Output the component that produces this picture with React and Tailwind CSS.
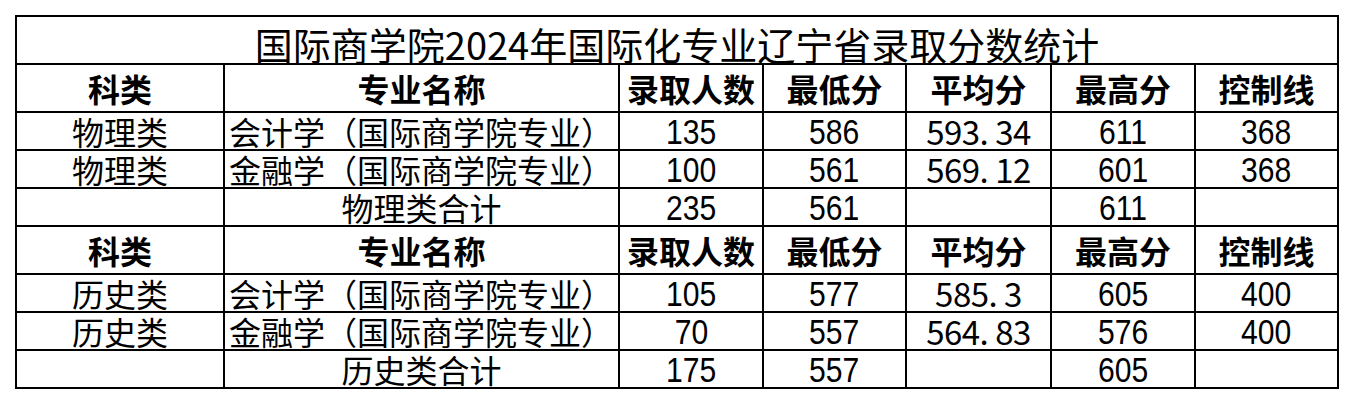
import React from "react";

const cjk = { fontFamily: '"Noto Sans CJK SC", "Noto Sans", sans-serif' };

const HeaderRow = () => (
  <tr className="h-[48px] font-bold text-[32px]">
    {["科类", "专业名称", "录取人数", "最低分", "平均分", "最高分", "控制线"].map((t) => (
      <td key={t} className="border-2 border-black text-center leading-none p-0">
        {t}
      </td>
    ))}
  </tr>
);

const Num = ({ children }) => (
  <span className="inline-block scale-x-[0.86] font-['Liberation_Sans',sans-serif] text-[35px] leading-none">{children}</span>
);

const DataRow = ({ kind, major, n, min, avg, max, ctl }) => (
  <tr className="h-[38px] text-[32px]">
    <td className="border-2 border-black text-center leading-none p-0">{kind}</td>
    <td className={`border-2 border-black leading-none p-0 ${kind ? "text-left pl-[4px]" : "text-center"}`}>{major}</td>
    <td className="border-2 border-black text-center leading-none p-0"><Num>{n}</Num></td>
    <td className="border-2 border-black text-center leading-none p-0"><Num>{min}</Num></td>
    <td className="border-2 border-black text-center leading-none p-0 text-[33px] tracking-[-0.5px]">{avg}</td>
    <td className="border-2 border-black text-center leading-none p-0"><Num>{max}</Num></td>
    <td className="border-2 border-black text-center leading-none p-0"><Num>{ctl}</Num></td>
  </tr>
);

export default function App() {
  return (
    <div className="w-[1354px] h-[404px] bg-white text-black overflow-hidden" style={cjk}>
      <table className="ml-[15px] mt-[15px] border-collapse table-fixed w-[1322px]">
        <colgroup>
          <col className="w-[208px]" />
          <col className="w-[395px]" />
          <col className="w-[144px]" />
          <col className="w-[143px]" />
          <col className="w-[145px]" />
          <col className="w-[144px]" />
          <col className="w-[143px]" />
        </colgroup>
        <tbody>
          <tr className="h-[48px]">
            <td colSpan={7} className="border-2 border-black text-center text-[38px] leading-none p-0 align-bottom">
              国际商学院2024年国际化专业辽宁省录取分数统计
            </td>
          </tr>
          <HeaderRow />
          <DataRow kind="物理类" major="会计学（国际商学院专业）" n="135" min="586" avg="593. 34" max="611" ctl="368" />
          <DataRow kind="物理类" major="金融学（国际商学院专业）" n="100" min="561" avg="569. 12" max="601" ctl="368" />
          <DataRow kind="" major="物理类合计" n="235" min="561" avg="" max="611" ctl="" />
          <HeaderRow />
          <DataRow kind="历史类" major="会计学（国际商学院专业）" n="105" min="577" avg="585. 3" max="605" ctl="400" />
          <DataRow kind="历史类" major="金融学（国际商学院专业）" n="70" min="557" avg="564. 83" max="576" ctl="400" />
          <DataRow kind="" major="历史类合计" n="175" min="557" avg="" max="605" ctl="" />
        </tbody>
      </table>
    </div>
  );
}
